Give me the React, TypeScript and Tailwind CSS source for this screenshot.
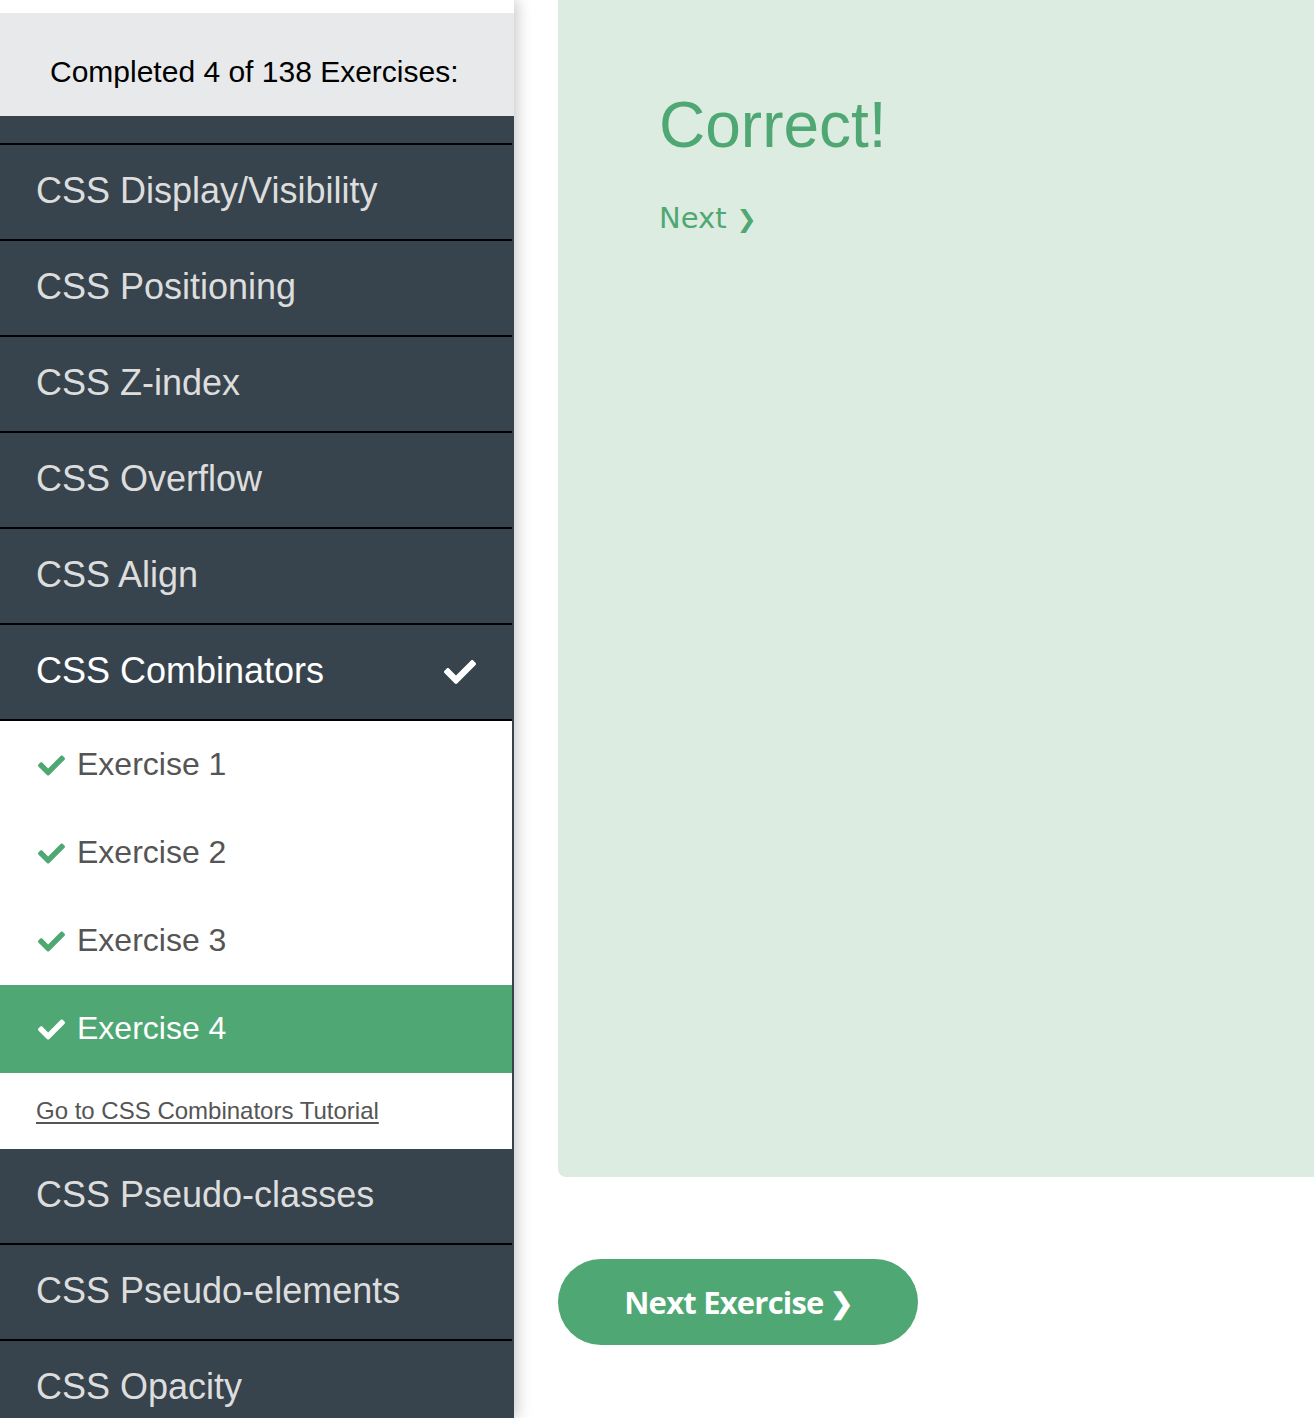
import { ReactNode } from "react";

const topItems = [
  "CSS Display/Visibility",
  "CSS Positioning",
  "CSS Z-index",
  "CSS Overflow",
  "CSS Align",
];

const bottomItems = ["CSS Pseudo-classes", "CSS Pseudo-elements", "CSS Opacity"];

const exercises = [
  { name: "Exercise 1", active: false },
  { name: "Exercise 2", active: false },
  { name: "Exercise 3", active: false },
  { name: "Exercise 4", active: true },
];

function Check({ className }: { className?: string }) {
  return (
    <svg viewBox="0 0 512 512" className={className} fill="currentColor">
      <path d="M173.898 439.404l-166.4-166.4c-9.997-9.997-9.997-26.206 0-36.204l36.203-36.204c9.997-9.998 26.207-9.998 36.204 0L192 312.69 432.095 72.596c9.997-9.997 26.207-9.997 36.204 0l36.203 36.204c9.997 9.997 9.997 26.206 0 36.204l-294.4 294.401c-9.998 9.997-26.207 9.997-36.204-.001z" />
    </svg>
  );
}

function TopicRow({ children, active = false }: { children: ReactNode; active?: boolean }) {
  return (
    <div
      className={`h-[96px] border-t-2 border-black flex items-center justify-between pl-[36px] pr-[36px] text-[36px] ${
        active ? "text-white border-b-2 h-[98px]" : "text-[#dddddd]"
      }`}
    >
      <span className="-mt-[3px]">{children}</span>
      {active && <Check className="w-[32px] h-[32px] text-white" />}
    </div>
  );
}

export default function App() {
  return (
    <div
      className="w-[1314px] h-[1418px] overflow-hidden bg-white flex"
      style={{ fontFamily: '"Liberation Sans", Arial, sans-serif' }}
    >
      {/* Sidebar */}
      <div className="w-[514px] shrink-0 pt-[13px] relative z-10 shadow-[3px_0_14px_rgba(0,0,0,0.22)]">
        <div className="h-[103px] bg-[#e7e9eb] flex items-center pl-[50px] pt-[14px] text-[30px] text-black">
          Completed 4 of 138 Exercises:
        </div>
        <div className="bg-[#38444d] pt-[27px] pr-[2px]">
          {topItems.map((t) => (
            <TopicRow key={t}>{t}</TopicRow>
          ))}
          <TopicRow active>CSS Combinators</TopicRow>

          <div className="bg-white">
            {exercises.map((ex) => (
              <div
                key={ex.name}
                className={`h-[88px] flex items-center pl-[38px] gap-[12px] text-[32px] ${
                  ex.active ? "bg-[#4fa873] text-white" : "text-[#555555]"
                }`}
              >
                <Check
                  className={`w-[27px] h-[27px] ${ex.active ? "text-white" : "text-[#4fa873]"}`}
                />
                <span className="-mt-[3px]">{ex.name}</span>
              </div>
            ))}
            <div className="h-[76px] flex items-center pl-[36px]">
              <a href="#" className="text-[24px] text-[#555555] underline underline-offset-[3px]">
                Go to CSS Combinators Tutorial
              </a>
            </div>
          </div>

          <div className="h-[94px] flex items-center pl-[36px] text-[36px] text-[#dddddd]">
            <span className="-mt-[3px]">{bottomItems[0]}</span>
          </div>
          {bottomItems.slice(1).map((t) => (
            <TopicRow key={t}>{t}</TopicRow>
          ))}
        </div>
      </div>

      {/* Main */}
      <div className="flex-1 pl-[44px] flex flex-col">
        <div className="h-[1177px] bg-[#ddece1] rounded-bl-[8px] pl-[101px] pt-[93px] -mr-[20px]">
          <h2 className="text-[64px] leading-none text-[#4fa873]">Correct!</h2>
          <a
            href="#"
            className="mt-[40px] inline-flex items-center gap-[10px] text-[29px] text-[#4fa873]"
            style={{ fontFamily: '"DejaVu Sans", Verdana, sans-serif' }}
          >
            Next
            <span className="font-bold text-[24px]">❯</span>
          </a>
        </div>
        <div className="mt-[82px]">
          <button
            className="w-[360px] h-[86px] rounded-full bg-[#4fa873] text-white text-[31px] font-bold tracking-[-0.8px] inline-flex items-center justify-center gap-[6px]"
            style={{ fontFamily: '"Open Sans", sans-serif' }}
          >
            Next Exercise
            <span className="text-[28px]">❯</span>
          </button>
        </div>
      </div>
    </div>
  );
}
